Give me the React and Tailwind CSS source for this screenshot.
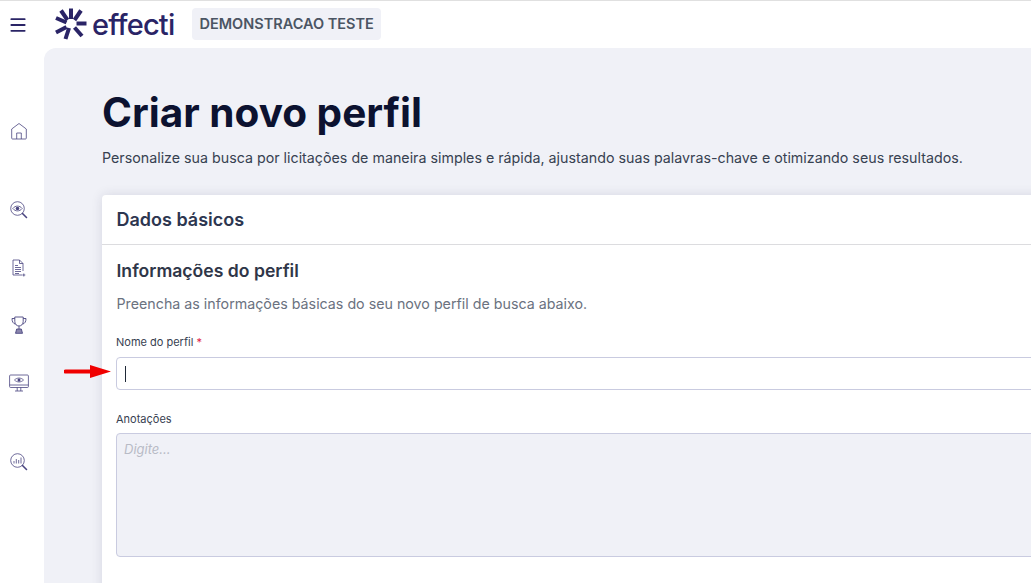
import { Menu } from 'lucide-react';

const ink = '#2a2466';
const line = '#4a4580';

const HomeIcon = () => (
  <svg width="18" height="18" viewBox="0 0 18 18" fill="none" stroke={line} strokeWidth="0.8" strokeLinejoin="round">
    <path d="M2.500 17h13c.5 0 .8-.3.8-.8V7L9 1.500 1.700 7v9.200c0 .5.300.8.800.8z" />
    <path d="M6.700 17v-6h4.600v6" />
  </svg>
);

const EyeSearchIcon = () => (
  <svg width="18" height="18" viewBox="0 0 18 18" fill="none" stroke={line} strokeWidth="0.8">
    <circle cx="7.500" cy="7.500" r="6.800" />
    <path d="M2.800 7.500c2.500-3.200 6.900-3.200 9.400 0-2.500 3.200-6.900 3.200-9.400 0z" />
    <circle cx="7.500" cy="7.500" r="1.800" fill={line} stroke="none" />
    <path d="M12.500 12.500l4 4" strokeWidth="1.600" strokeLinecap="round" />
  </svg>
);

const DocIcon = () => (
  <svg width="16" height="18" viewBox="0 0 16 18" fill="none" stroke={line} strokeWidth="0.8">
    <path d="M11 16H2V1h6.500L12 4.500V12" />
    <path d="M8.500 1v3.500H12" />
    <path d="M4 6.500h3M4 8.500h6M4 10.500h6M4 12.500h6M4 14.500h4" />
    <path d="M12.800 14.500v3M11.300 16h3" />
  </svg>
);

const TrophyIcon = () => (
  <svg width="16" height="18" viewBox="0 0 16 18" fill="none" stroke={line} strokeWidth="0.9">
    <path d="M3.800 1h8.400v4.500c0 2.500-1.800 4.500-4.200 4.500S3.800 8 3.800 5.500z" />
    <path d="M3.800 2.500H1c0 3 1 5 3.500 5.700M12.200 2.500H15c0 3-1 5-3.500 5.700" />
    <path d="M8 10v3" />
    <path d="M4.500 17.300l1.200-4.300h4.600l1.200 4.300z" fill="#8a86ad" />
  </svg>
);

const MonitorEyeIcon = () => (
  <svg width="20" height="18" viewBox="0 0 20 18" fill="none" stroke={line} strokeWidth="0.8">
    <rect x="0.600" y="1" width="18.800" height="12.500" rx="1" />
    <path d="M0.600 11h18.800" />
    <path d="M6 17h8M8.200 13.500v3.500M11.800 13.500v3.500" />
    <path d="M5.500 6c2.500-2.600 6.500-2.600 9 0-2.500 2.600-6.500 2.600-9 0z" />
    <circle cx="10" cy="6" r="1.500" fill={line} stroke="none" />
  </svg>
);

const ChartSearchIcon = () => (
  <svg width="18" height="18" viewBox="0 0 18 18" fill="none" stroke={line} strokeWidth="0.8">
    <circle cx="7.500" cy="7.500" r="6.800" />
    <path d="M4 8v2.500M6.300 6v4.500M8.700 7v3.500M11 4.500v6" />
    <path d="M12.500 12.500l4 4" strokeWidth="1.600" strokeLinecap="round" />
  </svg>
);

const LogoMark = () => (
  <svg width="32" height="32" viewBox="0 0 32 32" fill="none" stroke={ink} strokeWidth="4">
    <path d="M16 0.500v10.500" />
    <path d="M6 2.500l6.500 9.500" />
    <path d="M26 2.500l-6.500 9.500" />
    <path d="M1 10l10.500 4.500" />
    <path d="M21.500 15.500H31.500" />
    <path d="M1 24.500l10.500-5.500" />
    <path d="M14 20l-3.500 11" />
    <path d="M19.500 19.500l7.500 8.500" />
  </svg>
);

const navIcons = [
  { icon: <HomeIcon />, className: 'mt-[74px]' },
  { icon: <EyeSearchIcon />, className: 'mt-[61px]' },
  { icon: <DocIcon />, className: 'mt-[40px]' },
  { icon: <TrophyIcon />, className: 'mt-[39px]' },
  { icon: <MonitorEyeIcon />, className: 'mt-[40px]' },
  { icon: <ChartSearchIcon />, className: 'mt-[61px]' },
];

export default function App() {
  return (
    <div className="h-[583px] w-[1031px] overflow-hidden flex flex-col bg-white border-t border-[#e0e0e0] font-['Inter',sans-serif]">
      <header className="h-[47px] shrink-0 flex items-center pb-[1px]">
        <div className="w-[36px] flex justify-center mt-[2px]">
          <Menu size={20} color={ink} strokeWidth={2.2} />
        </div>
        <div className="ml-[19px] flex items-center">
          <LogoMark />
          <span className="ml-[5px] text-[29px] leading-none tracking-[-0.8px] font-medium text-[#2a2466]">effecti</span>
        </div>
        <div className="ml-[18px] h-[32px] px-[7px] flex items-center rounded bg-[#f0f1f7] text-[14.5px] font-semibold text-[#4b5563]">
          DEMONSTRACAO TESTE
        </div>
      </header>

      <div className="flex flex-1 min-h-0">
        <aside className="w-[44px] shrink-0 flex flex-col items-center pr-[7px]">
          {navIcons.map((item, i) => (
            <div key={i} className={`h-[18px] flex items-center justify-center ${item.className}`}>
              {item.icon}
            </div>
          ))}
        </aside>

        <main className="flex-1 min-w-0 rounded-tl-xl bg-[#f0f1f7] pl-[58px] pt-[37px] overflow-hidden">
          <h1 className="text-[40.5px] leading-[56px] font-bold text-[#0c1230]">Criar novo perfil</h1>
          <p className="mt-[7px] text-[14.25px] leading-[20px] text-[#374151]">
            Personalize sua busca por licitações de maneira simples e rápida, ajustando suas palavras-chave e otimizando seus resultados.
          </p>

          <section className="mt-[27px] w-[1100px] h-[420px] rounded-t bg-white shadow-[0_0_12px_rgba(30,30,70,0.12)]">
            <div className="h-[50px] flex items-center px-[14px] border-b border-[#dcdcdf]">
              <h2 className="pl-[0.5px] text-[18px] font-semibold text-[#2d3650]">Dados básicos</h2>
            </div>
            <div className="px-[14px] pt-[14px]">
              <h3 className="pl-[0.5px] text-[17.6px] leading-[24px] font-semibold text-[#2f3648]">Informações do perfil</h3>
              <p className="pl-[0.5px] mt-[11px] text-[14.25px] leading-[20px] text-[#6b7280]">
                Preencha as informações básicas do seu novo perfil de busca abaixo.
              </p>

              <label className="block mt-[20px] text-[11px] leading-[16px] text-[#374151]">
                Nome do perfil <span className="text-[#e11d48]">*</span>
              </label>
              <div className="relative mt-[7px] h-[33px] rounded border border-[#c9cbe0] bg-white flex items-center px-[8px]">
                <span className="w-px h-[16px] bg-[#1f2937]" />
                <svg className="absolute left-[-53px] top-[7px]" width="47" height="13" viewBox="0 0 47 13">
                  <path d="M1.500 4.500H26V0l21 6.500L26 13V8.500H1.500a2 2 0 0 1 0-4z" fill="#f00000" />
                </svg>
              </div>

              <label className="block mt-[21px] text-[11px] leading-[16px] text-[#374151]">Anotações</label>
              <div className="mt-[6px] h-[124px] rounded border border-[#c9cbe0] bg-[#f0f1f7] px-[7px] py-[6px]">
                <span className="block text-[13px] leading-[18px] italic text-[#b8bbc6]">Digite...</span>
              </div>
            </div>
          </section>
        </main>
      </div>
    </div>
  );
}
